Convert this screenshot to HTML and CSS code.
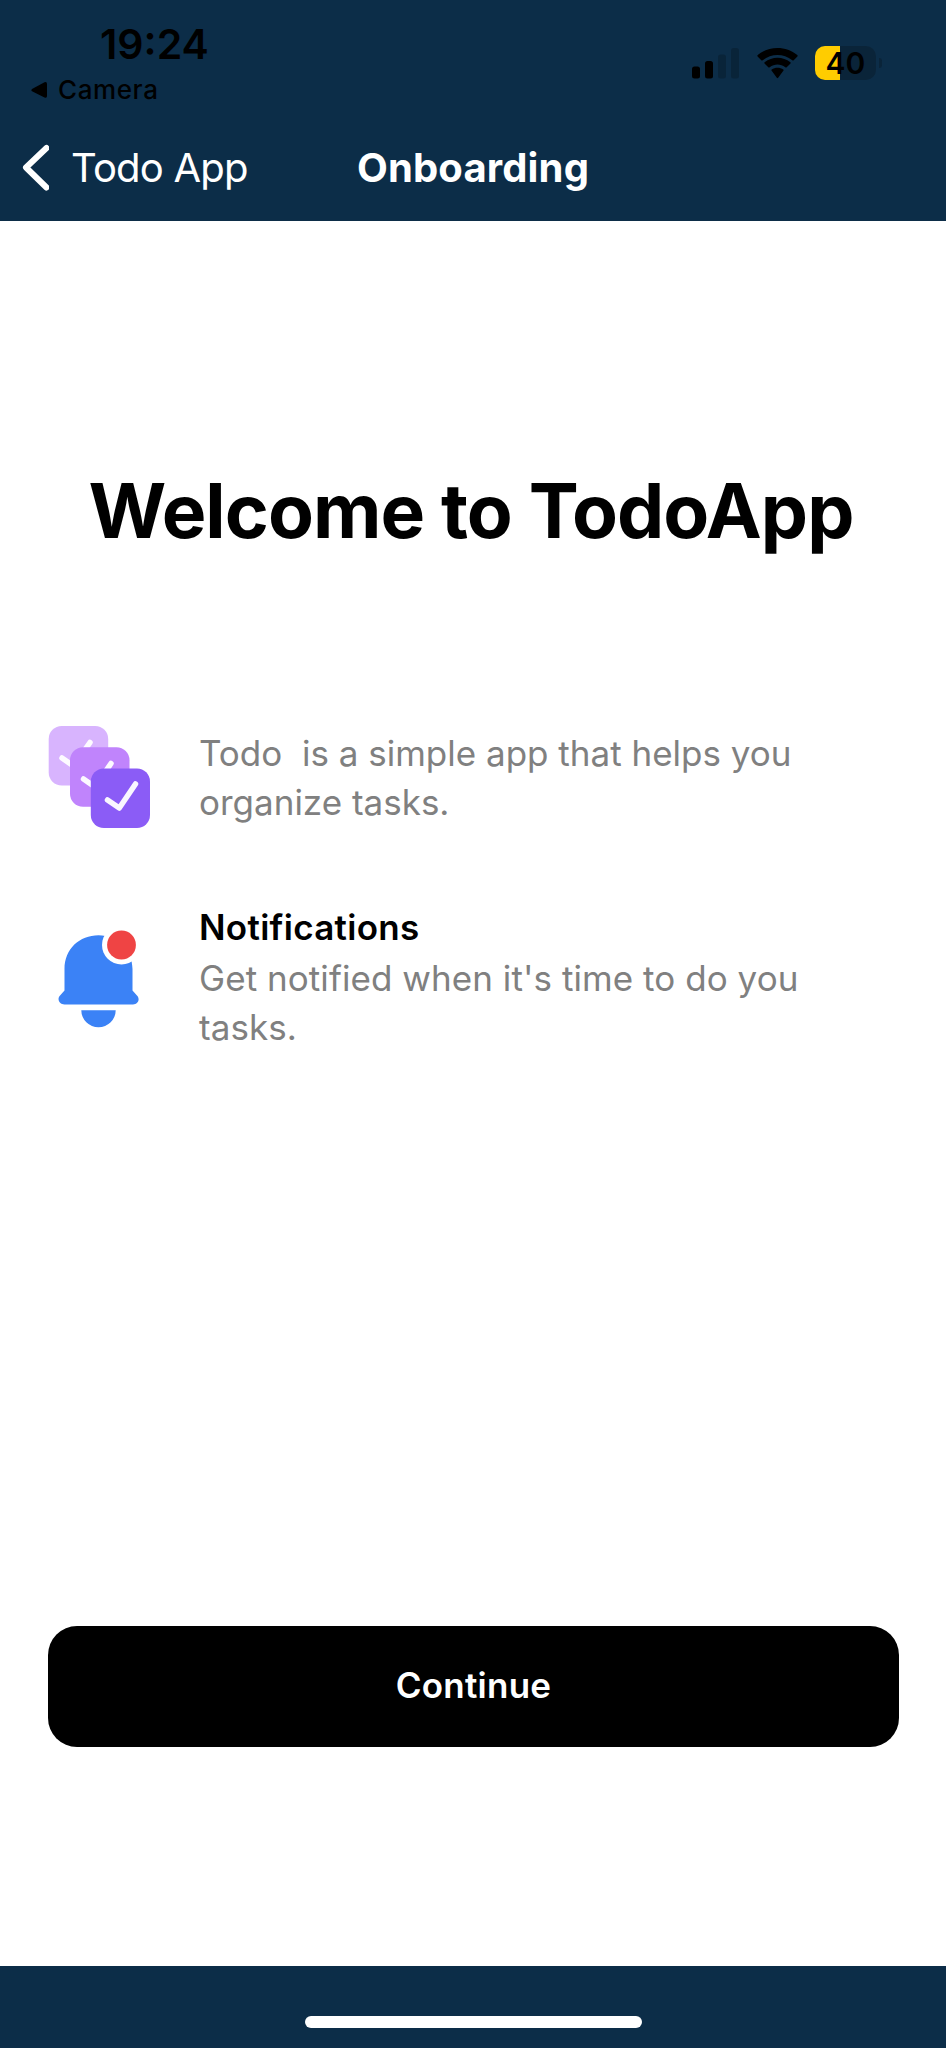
FILE: index.html
```html
<!DOCTYPE html>
<html lang="en">
<head>
<meta charset="utf-8">
<title>Onboarding</title>
<link rel="stylesheet" href="styles.css">
</head>
<body>
<div class="screen">
  <header class="header">
    <div class="status">
      <div class="status-left">
        <div class="time">19:24</div>
        <div class="return-app">
          <svg class="return-icon" width="18" height="18" viewBox="0 0 18 18"><path d="M2 8 14.500 1.300Q17 .5 17 3V15Q17 17.500 14.500 16.500L2 10.200Q.5 9.200 2 8Z"/></svg>
          <span class="camera">Camera</span>
        </div>
      </div>
      <div class="status-right">
        <svg class="signal" width="47" height="31" viewBox="0 0 47 31">
          <rect x="0" y="18.500" width="8" height="12" rx="2.500"/>
          <rect x="13" y="13" width="8" height="17.500" rx="2.500"/>
          <rect class="dim" x="26" y="6.500" width="8" height="24" rx="2.500"/>
          <rect class="dim" x="39" y="0" width="8" height="30.500" rx="2.500"/>
        </svg>
        <svg class="wifi" width="41" height="31" viewBox="0 0 41 31">
          <path d="M.6 8.500Q0 7.800.7 7.100C12-2.300 29-2.300 40.300 7.100Q41 7.800 40.400 8.500L36.700 12.200Q36 12.800 35.300 12.200C26.500 5.300 14.500 5.300 5.700 12.200Q5 12.800 4.300 12.200Z"/>
          <path d="M7.500 15.400Q7 14.800 7.600 14.200C15 8.100 26 8.100 33.400 14.200Q34 14.800 33.500 15.400L29.700 19.200Q29 19.800 28.300 19.200C23.500 15.700 17.500 15.700 12.700 19.200Q12 19.800 11.300 19.200Z"/>
          <path d="M14.500 22.500Q14 21.900 14.700 21.400C18 19.200 23 19.200 26.300 21.400Q27 21.900 26.500 22.500L21.200 29.800Q20.500 30.500 19.800 29.800Z"/>
        </svg>
        <div class="battery-wrap">
          <div class="battery">40</div>
          <div class="battery-cap"></div>
        </div>
      </div>
    </div>
    <nav class="nav">
      <a class="back">
        <svg width="28" height="48" viewBox="0 0 28 48"><path d="M25.500 4 5 23.500 25.500 43.500"/></svg>
        <span class="back-label">Todo App</span>
      </a>
      <span class="nav-title">Onboarding</span>
    </nav>
  </header>
  <main class="main">
    <h1 class="title">Welcome to TodoApp</h1>
    <section class="features">
      <div class="feature">
        <svg class="feature-icon" width="102" height="102" viewBox="0 0 102 102">
          <rect x=".7" y="0" width="59.500" height="59.500" rx="13" fill="#d8b4fe"/>
          <path class="tick" d="m14 32 11.500 8L42 16.500"/>
          <rect x="22" y="21.200" width="59.500" height="59.500" rx="13" fill="#c084fc"/>
          <path class="tick" d="m35.500 53 11.500 8L63 37.500"/>
          <rect x="42.800" y="42.500" width="59.200" height="59.500" rx="13" fill="#8b5cf6"/>
          <path class="tick" d="m59.500 74 11.800 8L87.500 58"/>
        </svg>
        <div class="copy">
          <p class="text first">Todo&nbsp; is a simple app that helps you<br>organize tasks.</p>
        </div>
      </div>
      <div class="feature">
        <svg class="feature-icon" width="102" height="102" viewBox="0 0 102 102">
          <path fill="#3b82f6" d="M16.500 42C16.500 22 31.500 8.300 50.500 8.300S84.500 23 84.500 42V63.500L88.500 68C92.500 71.500 90.500 77.500 85 77.500H16.500C11 77.500 8.500 71.500 12.500 68L16.500 63.500ZM33.300 83.300H67.700A17.200 17 0 0 1 33.300 83.300Z"/>
          <circle cx="73.500" cy="18" r="19.500" fill="#fff"/>
          <circle cx="73.500" cy="18" r="14.400" fill="#ef4444"/>
        </svg>
        <div class="copy">
          <h2 class="heading">Notifications</h2>
          <p class="text second">Get notified when it's time to do you<br>tasks.</p>
        </div>
      </div>
    </section>
    <button class="continue"><span>Continue</span></button>
  </main>
  <footer class="footer"><div class="home-bar"></div></footer>
</div>
</body>
</html>
```

FILE: styles.css
```css
* { box-sizing: border-box; }
body {
  margin: 0;
  font-family: Inter, "Liberation Sans", sans-serif;
  background: #fff;
  color: #000;
}
h1, h2, p { margin: 0; }
svg { display: block; flex: none; }
.screen {
  width: 946px;
  height: 2048px;
  display: flex;
  flex-direction: column;
  overflow: hidden;
}
.header { height: 221px; flex: none; background: #0c2d48; }
.status { height: 115px; display: flex; justify-content: space-between; }
.status-left { padding: 19px 0 0 30px; }
.time {
  padding-left: 70px;
  font-size: 41px;
  line-height: 50px;
  font-weight: 600;
}
.return-app { display: flex; align-items: center; gap: 10px; margin-top: 6px; }
.camera { font-size: 26px; line-height: 30px; font-weight: 500; letter-spacing: .6px; }
.status-right { display: flex; align-items: flex-start; padding: 46px 64px 0 0; }
.signal { margin: 2px 18px 0 0; }
.dim { opacity: .2; }
.wifi { margin: 2px 17px 0 0; }
.battery-wrap { display: flex; align-items: center; gap: 3px; }
.battery {
  width: 61px;
  height: 34px;
  border-radius: 10px;
  background: linear-gradient(90deg, #ffcc00 0 24.500px, #0a2439 24.500px);
  font-size: 30px;
  line-height: 34px;
  font-weight: 600;
  text-align: center;
}
.battery-cap { width: 3px; height: 10px; border-radius: 0 3px 3px 0; background: #0a2439; }
.nav {
  height: 106px;
  display: grid;
  grid-template-columns: 1fr auto 1fr;
  align-items: center;
  padding: 0 21px;
  color: #fff;
  font-size: 40px;
  line-height: 48px;
}
.back { display: flex; align-items: center; gap: 22px; }
.back path { fill: none; stroke: #fff; stroke-width: 6; stroke-linecap: round; stroke-linejoin: round; }
.back-label { letter-spacing: -.8px; }
.nav-title { font-weight: 700; letter-spacing: .15px; }
.main { flex: 1; padding: 245px 48px 0; }
.title { font-size: 75px; line-height: 90px; font-weight: 700; text-align: center; white-space: nowrap; letter-spacing: -.95px; padding-right: 4px; }
.features { display: flex; flex-direction: column; gap: 75px; padding-top: 170px; }
.feature { display: flex; align-items: center; gap: 49px; }
.tick { fill: none; stroke: #fff; stroke-opacity: .95; stroke-width: 5.500; stroke-linecap: round; stroke-linejoin: round; }
.copy { white-space: nowrap; font-size: 35px; line-height: 49px; }
.heading { font-size: 35px; line-height: 49px; font-weight: 600; margin-bottom: 2px; letter-spacing: .3px; }
.text { color: #808080; }
.first { padding-top: 1px; }
.second { letter-spacing: .06px; }
.continue {
  display: block;
  width: 851px;
  height: 121px;
  margin-top: 574px;
  padding: 0 0 3px;
  border: 0;
  border-radius: 29px;
  background: #000;
  color: #fff;
  font: 600 35px/48px Inter, sans-serif;
  letter-spacing: .25px;
}
.footer { height: 82px; flex: none; background: #0c2d48; padding-top: 50px; }
.home-bar { width: 337px; height: 12px; margin: 0 auto; border-radius: 6px; background: #fff; }
```
